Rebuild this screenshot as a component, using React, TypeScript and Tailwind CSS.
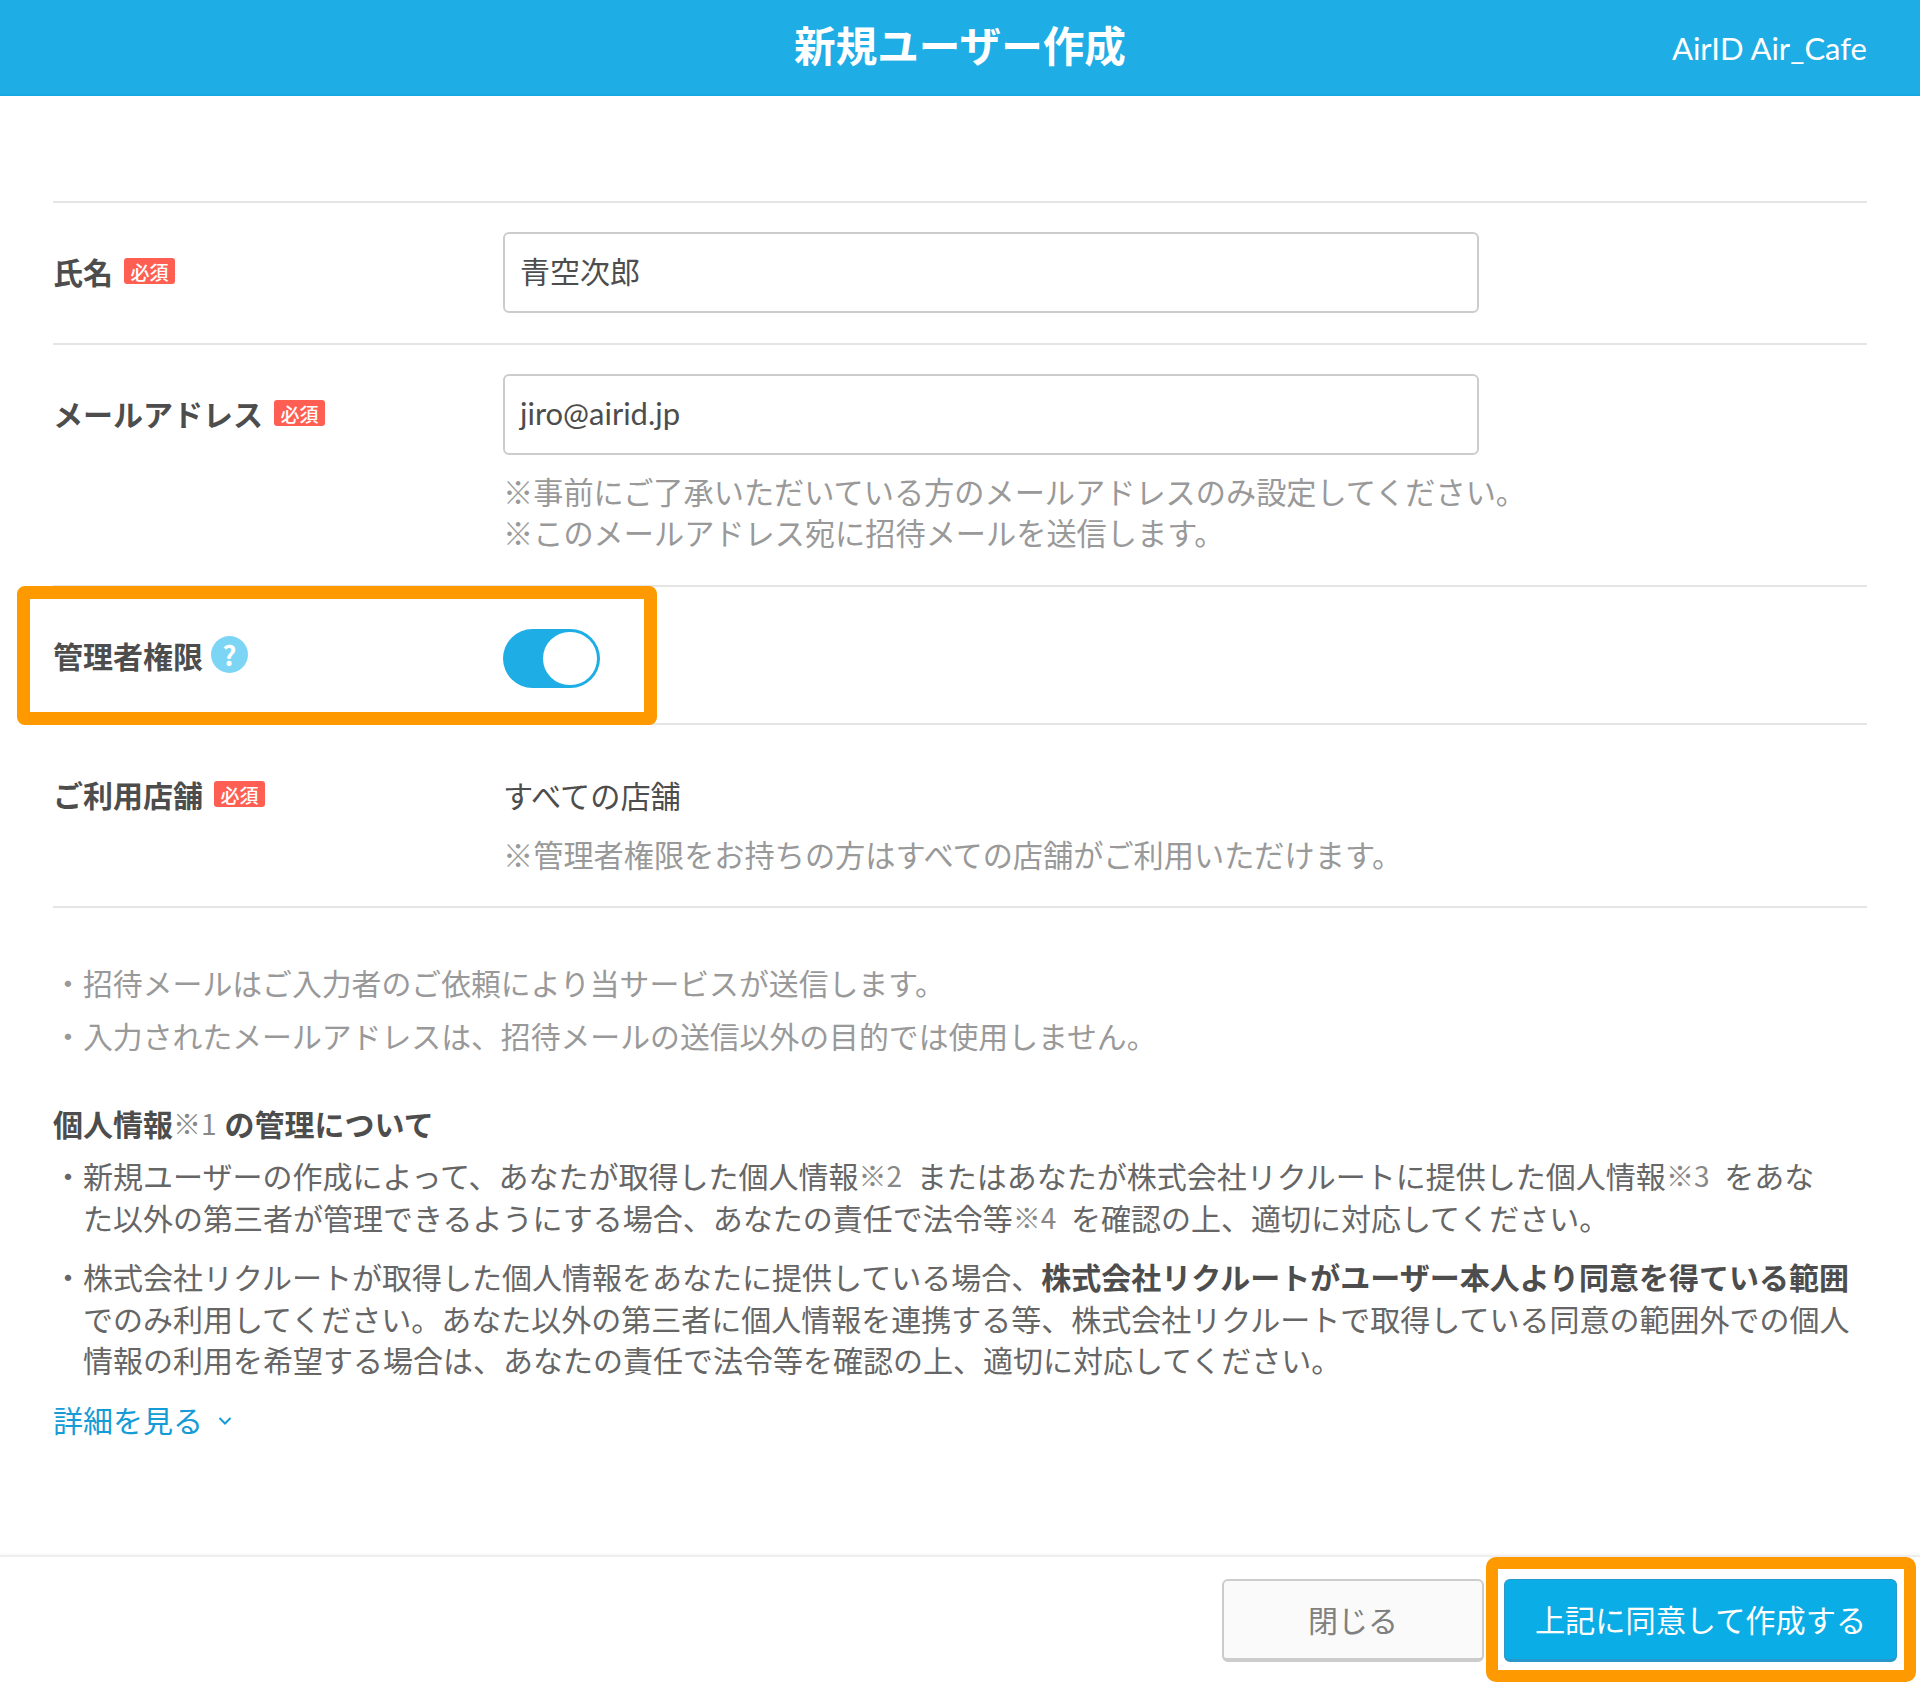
const FONT = "font-['Noto_Sans_CJK_JP','Noto_Sans',sans-serif]";

function Badge() {
  return (
    <span className="inline-flex h-[26px] w-[51px] items-center justify-center rounded-[3px] bg-[#ff5f52] text-[19px] leading-none font-medium text-white">
      必須
    </span>
  );
}

function Row({ label, badge, icon, children, className, labelClass }: { label: string; badge?: boolean; icon?: boolean; children: React.ReactNode; className: string; labelClass?: string }) {
  return (
    <div className={`flex border-t-2 border-[#e5e5e5] ${className}`}>
      <div className="flex w-[450px] shrink-0 items-start">
        <div className={`flex items-center gap-[11px] text-[30px] leading-[36px] font-bold text-[#4d4d4d] ${labelClass ?? ""}`}>
          <span>{label}</span>
          {badge && <Badge />}
          {icon && (
            <span className="-ml-[3px] flex h-[37px] w-[37px] items-center justify-center rounded-full bg-[#7dd5f5] text-[27px] leading-none font-bold text-white">?</span>
          )}
        </div>
      </div>
      <div className="min-w-0 flex-1">{children}</div>
    </div>
  );
}

function Field({ value, font }: { value: string; font: string }) {
  return (
    <div className={`flex h-[81px] w-[976px] items-center rounded-[6px] border-2 border-[#cccccc] bg-white px-[15px] text-[#4d4d4d] ${font}`}>
      {value}
    </div>
  );
}

function Sup({ children }: { children: React.ReactNode }) {
  return <span className="relative -top-[1px] mr-[8px] text-[28px] leading-none font-normal text-[#888888]">{children}</span>;
}

export default function App() {
  return (
    <div className={`relative flex h-[1688px] w-[1920px] flex-col overflow-hidden bg-white ${FONT}`}>
      <header className="relative flex h-[96px] shrink-0 items-center justify-center border-b-2 border-[#15a8e2] bg-[#1eade5] pb-[5px]">
        <h1 className="text-[41.6px] leading-none font-bold text-white">新規ユーザー作成</h1>
        <span className="absolute right-[53px] top-[30px] font-['Lato',sans-serif] text-[31px] leading-[36px] text-white">AirID Air_Cafe</span>
      </header>

      <main className="flex-1 px-[53px] pt-[105px]">
        <Row label="氏名" badge className="h-[142px] pt-[29px]" labelClass="mt-[21px]">
          <Field value="青空次郎" font="pb-[4px] text-[30px]" />
        </Row>
        <Row label="メールアドレス" badge className="h-[242px] pt-[29px]" labelClass="mt-[21px]">
          <Field value="jiro@airid.jp" font="pb-[2px] font-['Lato',sans-serif] text-[31px]" />
          <p className="mt-[16px] text-[30.2px] leading-[41px] whitespace-nowrap text-[#999999]">
            ※事前にご了承いただいている方のメールアドレスのみ設定してください。
            <br />
            ※このメールアドレス宛に招待メールを送信します。
          </p>
        </Row>
        <Row label="管理者権限" icon className="h-[138px] pt-[50px]" labelClass="-mt-[1px]">
          <div className="relative mt-[-8px] h-[59px] w-[97px] rounded-full bg-[#1eade5]">
            <div className="absolute right-[3px] top-[3px] h-[53px] w-[54px] rounded-full bg-white" />
          </div>
        </Row>
        <Row label="ご利用店舗" badge className="h-[183px] pt-[50px]" labelClass="mt-[1px]">
          <p className="text-[30.2px] leading-[40px] text-[#4d4d4d]">すべての店舗</p>
          <p className="mt-[19px] text-[30.2px] leading-[41px] text-[#999999]">※管理者権限をお持ちの方はすべての店舗がご利用いただけます。</p>
        </Row>

        <ul className="border-t-2 border-[#e5e5e5] pt-[54px] text-[29.85px] leading-[41px] text-[#999999]">
          <li className="flex"><span className="w-[30px] text-center">・</span><span>招待メールはご入力者のご依頼により当サービスが送信します。</span></li>
          <li className="mt-[12px] flex"><span className="w-[30px] text-center">・</span><span>入力されたメールアドレスは、招待メールの送信以外の目的では使用しません。</span></li>
        </ul>

        <h2 className="mt-[47px] text-[30px] leading-[41px] font-bold text-[#4d4d4d]">
          個人情報<Sup>※1</Sup>の管理について
        </h2>

        <div className="text-[30px] leading-[41.5px] whitespace-nowrap text-[#666666]">
          <div className="mt-[11px] flex">
            <span className="w-[30px] shrink-0 text-center">・</span>
            <p>
              新規ユーザーの作成によって、あなたが取得した個人情報<Sup>※2</Sup> またはあなたが株式会社リクルートに提供した個人情報<Sup>※3</Sup> をあな
              <br />
              た以外の第三者が管理できるようにする場合、あなたの責任で法令等<Sup>※4</Sup> を確認の上、適切に対応してください。
            </p>
          </div>
          <div className="mt-[18px] flex">
            <span className="w-[30px] shrink-0 text-center">・</span>
            <p>
              株式会社リクルートが取得した個人情報をあなたに提供している場合、<b className="font-bold text-[#4d4d4d]">株式会社リクルートがユーザー本人より同意を得ている範囲</b>
              <br />
              でのみ利用してください。あなた以外の第三者に個人情報を連携する等、株式会社リクルートで取得している同意の範囲外での個人
              <br />
              情報の利用を希望する場合は、あなたの責任で法令等を確認の上、適切に対応してください。
            </p>
          </div>
        </div>

        <a className="mt-[18px] flex items-center gap-[15px] text-[30px] leading-[41px] text-[#159bd6]">
          詳細を見る
          <svg className="mt-[4px]" width="14" height="10" viewBox="0 0 14 10" fill="none" stroke="#159bd6" strokeWidth="2"><path d="M1.5 2 L7 7.5 L12.5 2" /></svg>
        </a>
      </main>

      <footer className="flex h-[133px] shrink-0 items-start justify-end gap-[20px] border-t-2 border-[#eeeeee] pr-[23px] pt-[22px] shadow-[0_-1px_3px_rgba(0,0,0,0.04)]">
        <button className="h-[83px] w-[262px] rounded-[6px] border-2 border-b-[4px] border-[#cccccc] bg-[#fafafa] text-[30px] text-[#808080]">閉じる</button>
        <button className="h-[83px] w-[393px] rounded-[6px] border border-b-[3px] border-[#2898cc] bg-[#0bade6] text-[30.2px] text-white">上記に同意して作成する</button>
      </footer>

      <div className="absolute left-[17px] top-[586px] h-[139px] w-[640px] rounded-[8px] border-[13px] border-[#ff9900]" />
      <div className="absolute left-[1486px] top-[1557px] h-[125px] w-[430px] rounded-[10px] border-[12px] border-[#ff9900]" />
    </div>
  );
}
